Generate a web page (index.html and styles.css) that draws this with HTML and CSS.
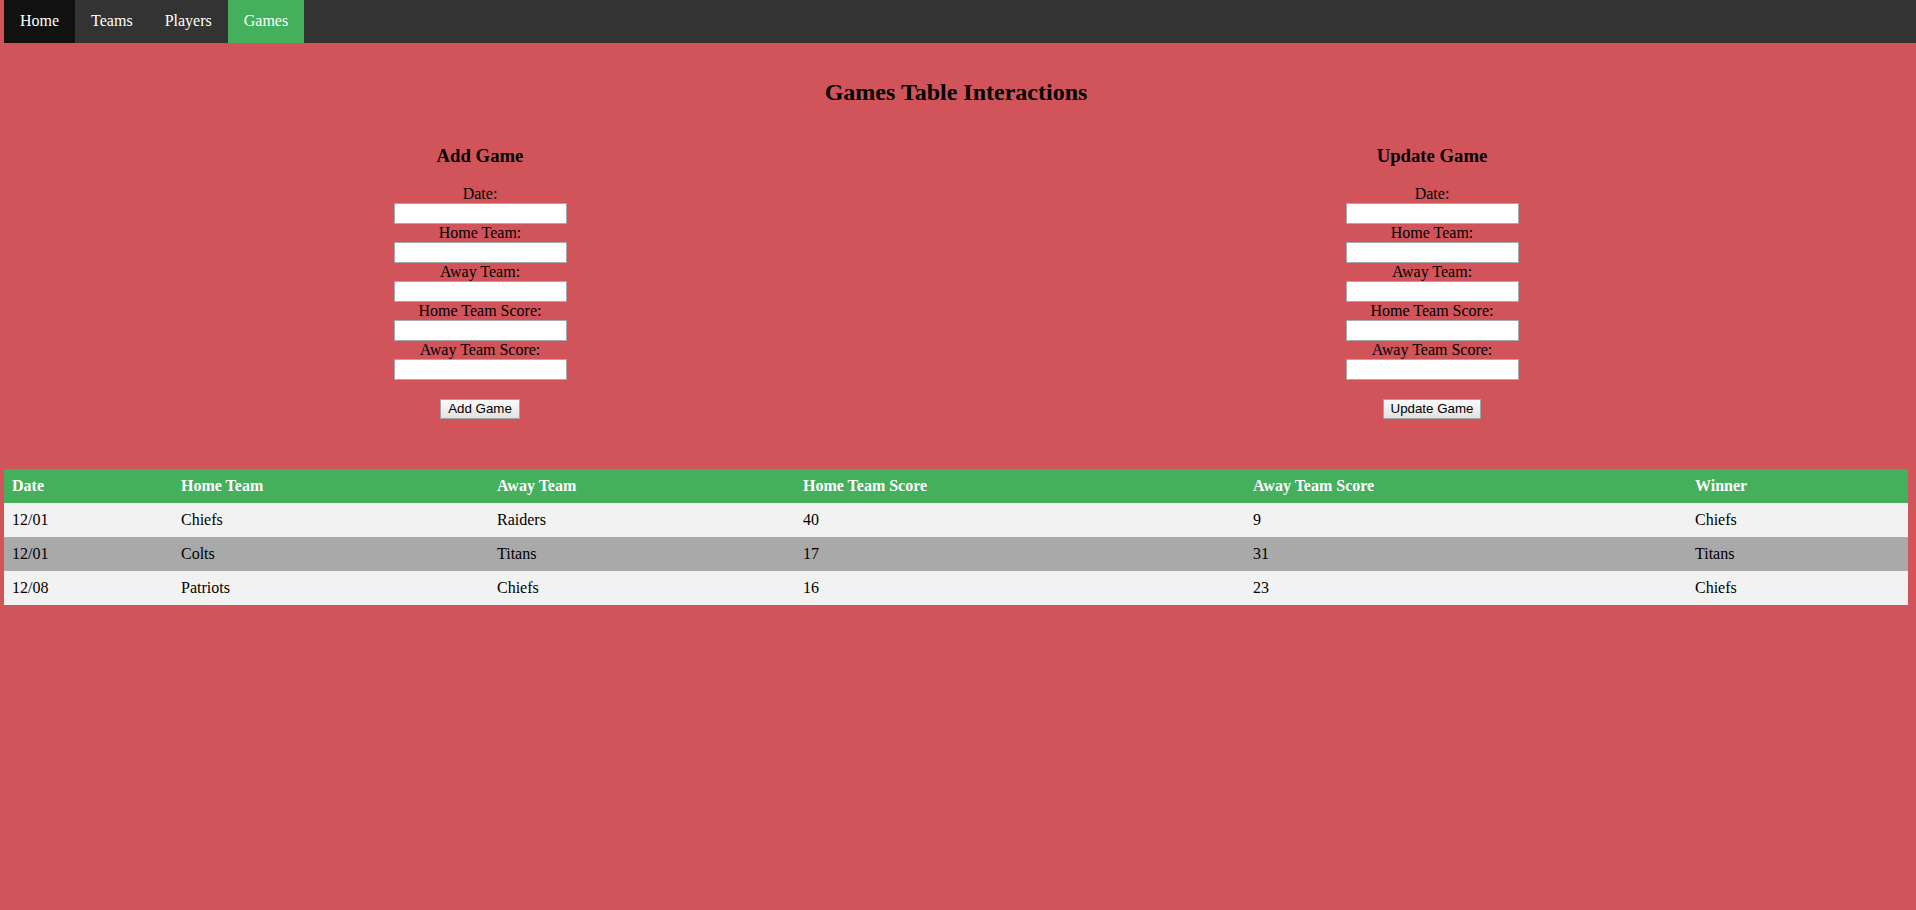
FILE: index.html
```html
<!DOCTYPE html>
<html lang="en">
<head>
<meta charset="utf-8">
<title>Games</title>
<link rel="stylesheet" href="styles.css">
</head>
<body>
<nav class="topnav">
  <a class="nav-link active" href="#">Home</a>
  <a class="nav-link" href="#">Teams</a>
  <a class="nav-link" href="#">Players</a>
  <a class="nav-link current" href="#">Games</a>
</nav>
<main class="content">
  <h2 class="page-title">Games Table Interactions</h2>
  <div class="forms">
    <section class="form-col">
      <h3 class="form-title">Add Game</h3>
      <form class="game-form">
        <label class="field-label">Date:</label>
        <input class="field-input" type="text">
        <label class="field-label">Home Team:</label>
        <input class="field-input" type="text">
        <label class="field-label">Away Team:</label>
        <input class="field-input" type="text">
        <label class="field-label">Home Team Score:</label>
        <input class="field-input" type="text">
        <label class="field-label">Away Team Score:</label>
        <input class="field-input" type="text">
        <button class="submit-btn" type="button">Add Game</button>
      </form>
    </section>
    <section class="form-col">
      <h3 class="form-title">Update Game</h3>
      <form class="game-form">
        <label class="field-label">Date:</label>
        <input class="field-input" type="text">
        <label class="field-label">Home Team:</label>
        <input class="field-input" type="text">
        <label class="field-label">Away Team:</label>
        <input class="field-input" type="text">
        <label class="field-label">Home Team Score:</label>
        <input class="field-input" type="text">
        <label class="field-label">Away Team Score:</label>
        <input class="field-input" type="text">
        <button class="submit-btn" type="button">Update Game</button>
      </form>
    </section>
  </div>
  <table class="games-table">
    <colgroup>
      <col class="col-date">
      <col class="col-home">
      <col class="col-away">
      <col class="col-hscore">
      <col class="col-ascore">
      <col class="col-winner">
    </colgroup>
    <thead>
      <tr>
        <th>Date</th>
        <th>Home Team</th>
        <th>Away Team</th>
        <th>Home Team Score</th>
        <th>Away Team Score</th>
        <th>Winner</th>
      </tr>
    </thead>
    <tbody>
      <tr>
        <td>12/01</td><td>Chiefs</td><td>Raiders</td><td>40</td><td>9</td><td>Chiefs</td>
      </tr>
      <tr>
        <td>12/01</td><td>Colts</td><td>Titans</td><td>17</td><td>31</td><td>Titans</td>
      </tr>
      <tr>
        <td>12/08</td><td>Patriots</td><td>Chiefs</td><td>16</td><td>23</td><td>Chiefs</td>
      </tr>
    </tbody>
  </table>
</main>
</body>
</html>
```

FILE: styles.css
```css
html, body {
  margin: 0;
  padding: 0;
}

body {
  background: #d0545a;
  font-family: "Liberation Serif", "Times New Roman", serif;
  font-size: 16px;
  color: #000;
}

.topnav {
  display: flex;
  margin-left: 4px;
  background: #333333;
}

.nav-link {
  display: block;
  padding: 11px 16px 13px;
  line-height: 19px;
  color: #ffffff;
  text-decoration: none;
}

.nav-link.active {
  background: #111111;
}

.nav-link.current {
  background: #44b05c;
}

.content {
  margin: 0 8px 0 4px;
  padding-top: 16px;
}

.page-title {
  margin: 20px 0;
  font-size: 24px;
  font-weight: bold;
  text-align: center;
}

.forms {
  display: flex;
  margin-bottom: 50px;
}

.form-col {
  flex: 1 1 0;
  text-align: center;
}

.form-title {
  margin: 18.72px 0;
  font-size: 18.72px;
  font-weight: bold;
}

.game-form {
  display: flex;
  flex-direction: column;
  align-items: center;
}

.field-label {
  display: block;
  line-height: 18px;
  height: 18px;
}

.field-input {
  box-sizing: border-box;
  width: 173px;
  height: 21px;
  margin: 0;
  padding: 1px 2px;
  border: 1px solid #a9a9a9;
  background: #ffffff;
  font-family: Arial, "Liberation Sans", sans-serif;
  font-size: 13.33px;
}

.submit-btn {
  margin-top: 19px;
  height: 20px;
  padding: 1px 7px;
  line-height: 16px;
  border: 1px solid #a3a3a3;
  background: linear-gradient(#fbfbfb, #e2e2e2);
  font-family: Arial, "Liberation Sans", sans-serif;
  font-size: 13.33px;
  color: #000;
  box-sizing: border-box;
}

.games-table {
  width: 100%;
  table-layout: fixed;
  border-collapse: collapse;
}

.col-date { width: 169px; }
.col-home { width: 316px; }
.col-away { width: 306px; }
.col-hscore { width: 450px; }
.col-ascore { width: 442px; }
.col-winner { width: 221px; }

.games-table th,
.games-table td {
  padding: 8px;
  text-align: left;
  line-height: 18px;
}

.games-table th {
  background: #44b05c;
  color: #ffffff;
  font-weight: bold;
}

.games-table tbody tr:nth-child(odd) {
  background: #f2f2f2;
}

.games-table tbody tr:nth-child(even) {
  background: #a9a9a9;
}
```
